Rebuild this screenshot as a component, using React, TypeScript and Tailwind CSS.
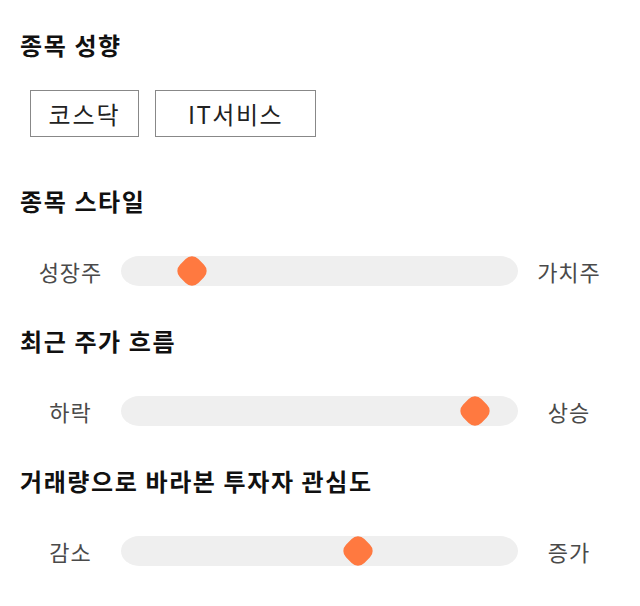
import React from "react";

const sliders = [
  { title: "종목 스타일", left: "성장주", right: "가치주", center: 192 },
  { title: "최근 주가 흐름", left: "하락", right: "상승", center: 475 },
  { title: "거래량으로 바라본 투자자 관심도", left: "감소", right: "증가", center: 358 },
];

const TRACK_LEFT = 121;

function Slider({ left, right, center }: { left: string; right: string; center: number }) {
  return (
    <div className="flex items-center h-[30px]">
      <div className="w-[101px] text-center text-[22px] tracking-[1px] leading-[30px] text-[#4a4a4a]">{left}</div>
      <div className="relative flex-1 h-[30px] rounded-[18px/15px] bg-[#efefef]">
        <div
          className="absolute top-1/2 w-[26px] h-[26px] -translate-x-1/2 -translate-y-1/2 rotate-45 rounded-[9px] bg-[#ff7940]"
          style={{ left: center - TRACK_LEFT }}
        />
      </div>
      <div className="w-[102px] text-center text-[22px] tracking-[1px] leading-[30px] text-[#4a4a4a]">{right}</div>
    </div>
  );
}

export default function App() {
  return (
    <div className="w-[640px] h-[606px] bg-white px-[20px] pt-[30px] font-['Noto_Sans_CJK_KR',sans-serif]">
      <h2 className="text-[24px] tracking-[1.6px] font-bold leading-[30px] text-[#111]">종목 성향</h2>
      <div className="mt-[30px] flex gap-[16px] pl-[10px]">
        <div className="w-[109px] h-[47px] border border-[#888] flex items-center justify-center text-[24px] tracking-[2px] text-[#222]">
          코스닥
        </div>
        <div className="w-[161px] h-[47px] border border-[#888] flex items-center justify-center text-[24px] tracking-[1.5px] text-[#222]">
          IT서비스
        </div>
      </div>

      <h2 className="mt-[49px] text-[24px] tracking-[1.6px] font-bold leading-[30px] text-[#111]">{sliders[0].title}</h2>
      <div className="mt-[40px]">
        <Slider {...sliders[0]} />
      </div>

      <h2 className="mt-[40px] text-[24px] tracking-[1.6px] font-bold leading-[30px] text-[#111]">{sliders[1].title}</h2>
      <div className="mt-[40px]">
        <Slider {...sliders[1]} />
      </div>

      <h2 className="mt-[40px] text-[24px] tracking-[1.6px] font-bold leading-[30px] text-[#111]">{sliders[2].title}</h2>
      <div className="mt-[40px]">
        <Slider {...sliders[2]} />
      </div>
    </div>
  );
}
